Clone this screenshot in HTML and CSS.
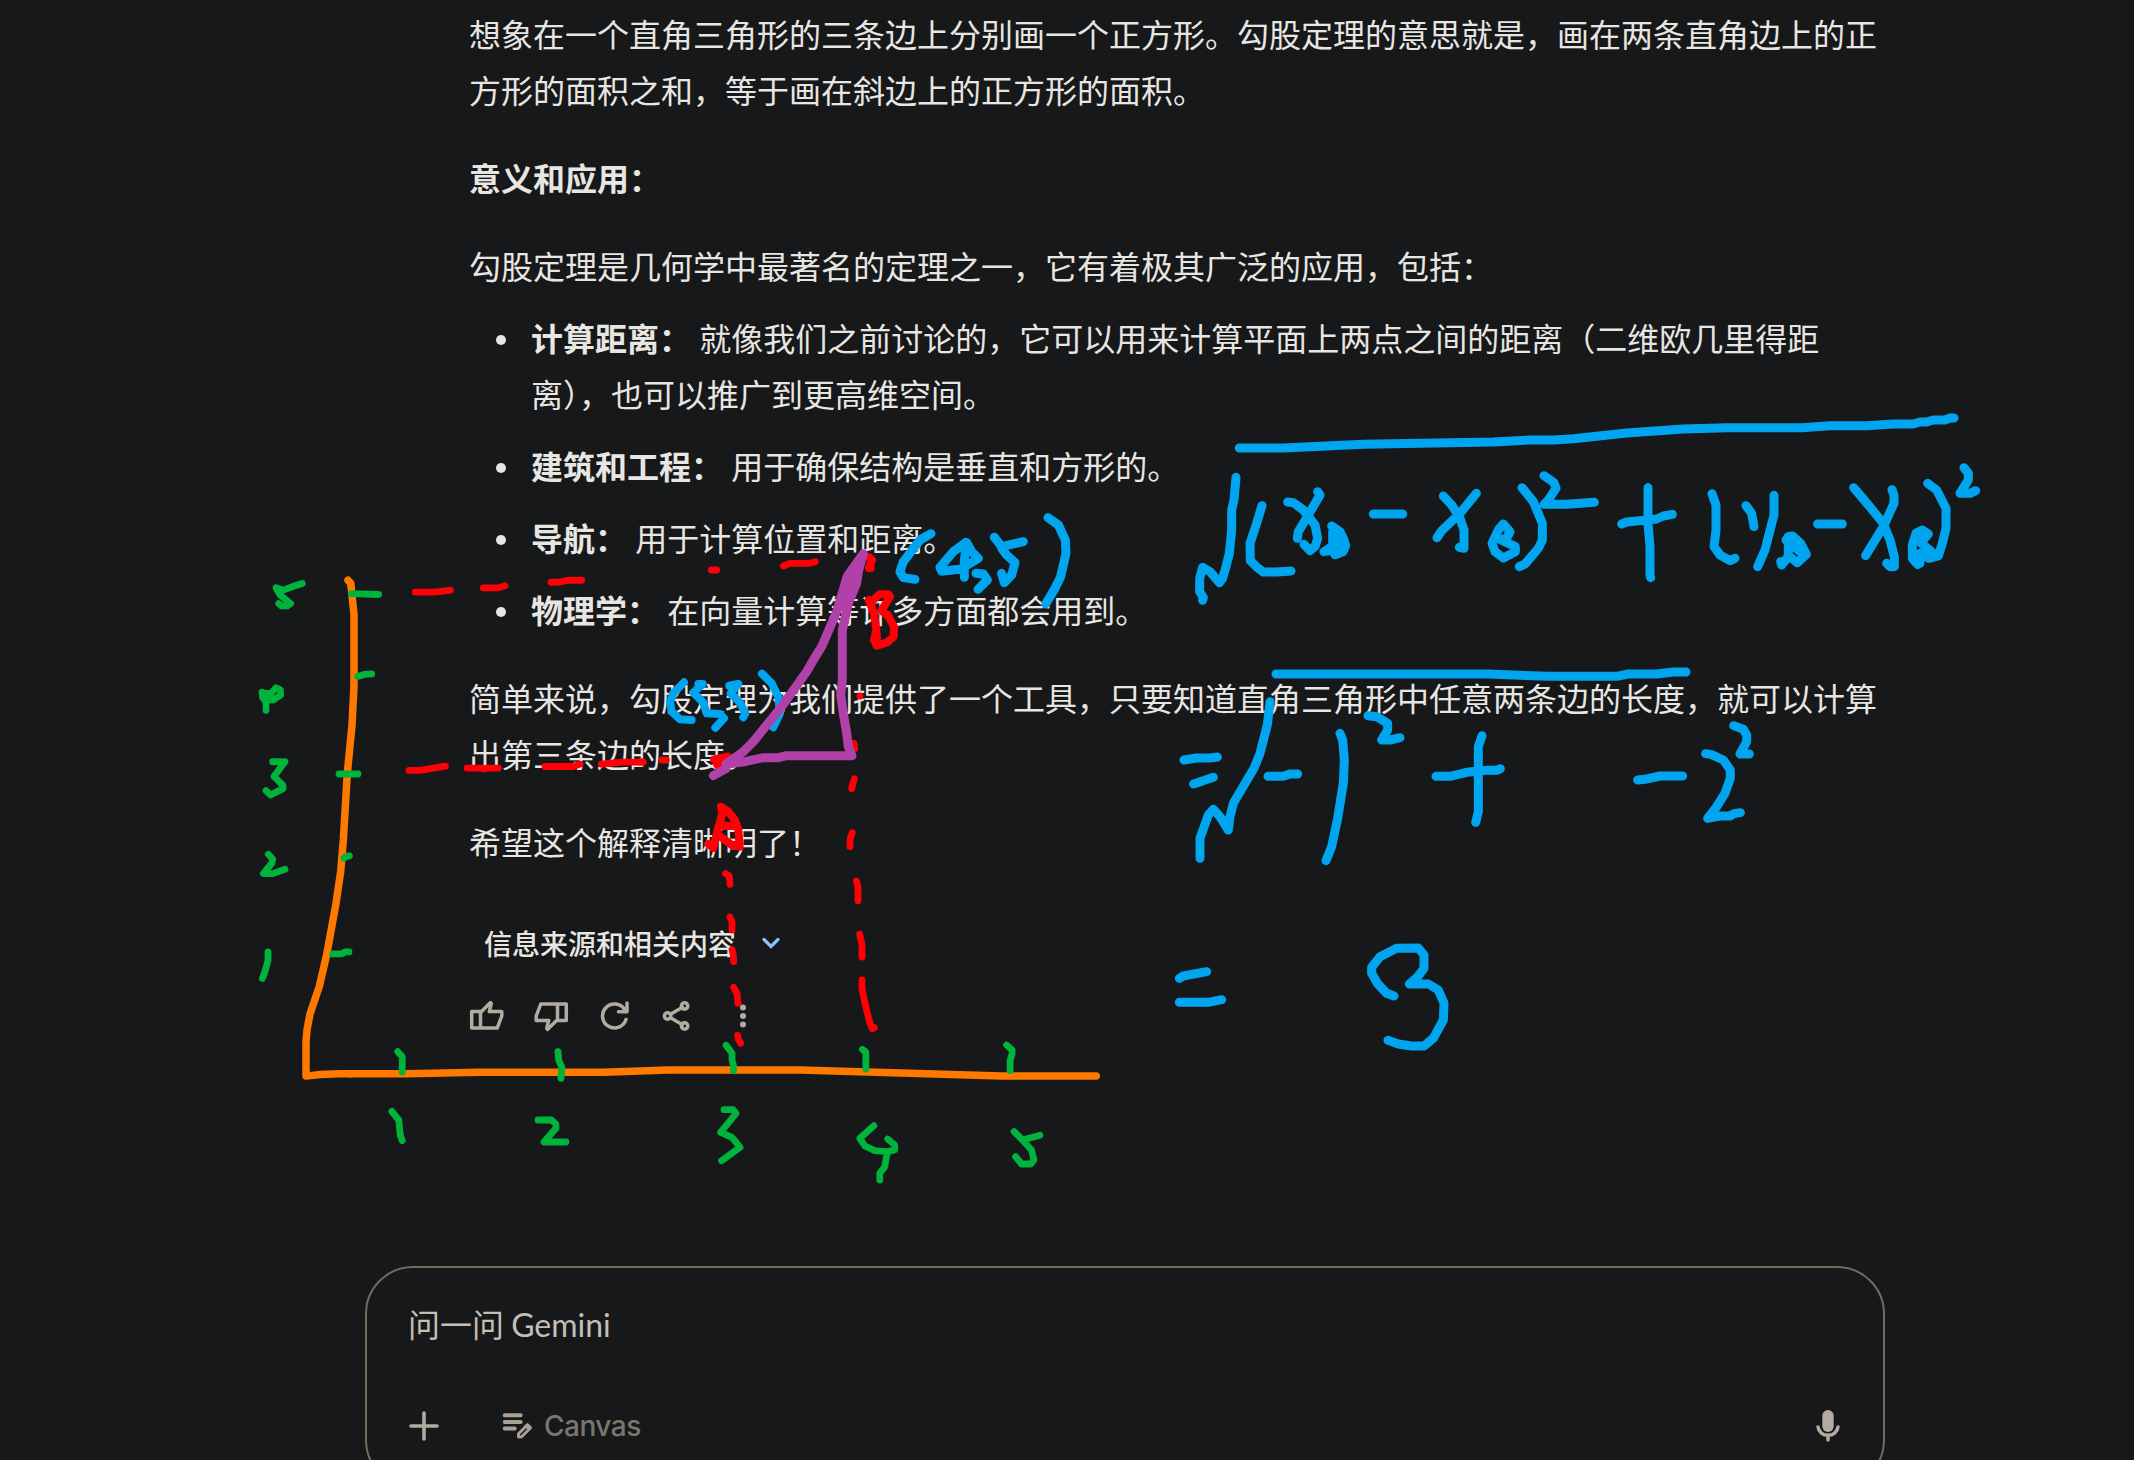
FILE: index.html
```html
<!DOCTYPE html>
<html lang="zh-CN">
<head>
<meta charset="utf-8">
<title>Gemini</title>
<link rel="stylesheet" href="styles.css">
</head>
<body>
<main class="page">
  <article class="answer">
    <p>想象在一个直角三角形的三条边上分别画一个正方形。勾股定理的意思就是，画在两条直角边上的正方形的面积之和，等于画在斜边上的正方形的面积。</p>
    <p><strong>意义和应用：</strong></p>
    <p class="lead">勾股定理是几何学中最著名的定理之一，它有着极其广泛的应用，包括：</p>
    <ul>
      <li><strong>计算距离：</strong> 就像我们之前讨论的，它可以用来计算平面上两点之间的距离（二维欧几里得距离），也可以推广到更高维空间。</li>
      <li><strong>建筑和工程：</strong> 用于确保结构是垂直和方形的。</li>
      <li><strong>导航：</strong> 用于计算位置和距离。</li>
      <li><strong>物理学：</strong> 在向量计算等许多方面都会用到。</li>
    </ul>
    <p>简单来说，勾股定理为我们提供了一个工具，只要知道直角三角形中任意两条边的长度，就可以计算出第三条边的长度。</p>
    <p>希望这个解释清晰明了！</p>
    <div class="sources">
      <span>信息来源和相关内容</span>
      <svg class="chevron" viewBox="0 0 20 12"><path d="M3 2.5l7 7 7-7"/></svg>
    </div>
    <div class="actions">
      <svg viewBox="0 0 36 36"><path d="M2.700 13.500h8.800v16.600H2.700zM11.500 14.500L21.500 4.500l.8 1.200-2 7.800h12.500v4.500l-4.600 12.100H11.500"/></svg>
      <svg viewBox="0 0 36 36"><path d="M33.300 22.500h-8.800V5.900h8.800zM24.500 21.500L14.500 31.500l-.8-1.200 2-7.800H3.200V18L7.800 5.900h16.700"/></svg>
      <svg viewBox="0 0 36 36"><path d="M29 21.500A12 12 0 1 1 27.500 11.200M30 5v8.700H21.500M26 13.700l4-4"/></svg>
      <svg viewBox="0 0 36 36"><path d="M9.500 16.300L21.500 9.300M9.500 19.700l12 7"/><circle cx="6.600" cy="18" r="3.200"/><circle cx="23.600" cy="8" r="3.200"/><circle cx="23.600" cy="28" r="3.200"/></svg>
      <svg class="dots" viewBox="0 0 36 36"><circle cx="18" cy="9.500" r="3"/><circle cx="18" cy="18" r="3"/><circle cx="18" cy="26.500" r="3"/></svg>
    </div>
  </article>

  <section class="composer">
    <div class="prompt">问一问 <span>Gemini</span></div>
    <div class="tools">
      <svg class="plus" viewBox="0 0 32 32"><path d="M16 3v26M3 16h26"/></svg>
      <div class="canvas">
        <svg class="canvas-icon" viewBox="0 0 32 30"><path d="M3.700 4.200h16M3.700 11h16M3.700 17.500h10"/><path class="pencil" d="M17.500 22.700l9-9 3.100 3.100-9 9-3.100.1z"/><path class="pencil" d="M25 15l3 3"/></svg>
        <span>Canvas</span>
      </div>
      <svg class="mic" viewBox="0 0 24 34"><rect x="6.300" y="1" width="11.400" height="22" rx="5.700"/><path d="M2 18c.7 5 5 8.300 10 8.300S21.300 23 22 18M12 26v5"/></svg>
    </div>
  </section>
</main>

<svg class="ink" viewBox="0 0 2134 1460">
  <g class="orange">
    <path transform="translate(230 500) scale(.33333 .39541)" d="M354 203L362 210 366 240 372 290V470L366 570 352 690 340 860 332 940 318 1020 290 1150 268 1230 240 1300 231 1340 228 1370V1457L270 1453 325 1451H360"/>
    <path transform="translate(350 1020) scale(.49745 .33333)" d="M0 161H115L260 157H510L640 150H905L1310 168H1500"/>
  </g>
  <g class="red" transform="translate(230 500) scale(.33333 .39541)">
    <path d="M556 233H615L661 228M760 222H805L825 217M963 208H985L1015 203H1055M537 684H570L646 673M711 678H755L765 680 770 678H805M945 674H1030L1050 668M1114 668L1175 663H1240"/>
  </g>
  <g class="red" transform="translate(640 480) scale(.33333)">
    <path d="M0 846H4M66 840H79M214 270H230M430 258L450 250H510L526 245M660 648h.1M642 790L644 806M643 896L635 926"/>
    <path class="bold" d="M222 838L262 830 232 855 250 848M688 232L696 240 687 264H692M686 360L702 400 709 450 712 496M709 450L702 480M698 362L718 343H745L750 350 724 392 745 408 762 440 761 470 740 488 710 497 703 480"/>
  </g>
  <g class="red" transform="translate(440 780) scale(.33333)">
    <path class="bold" d="M805 192L820 204 833 150 847 100 843 80 865 95 885 120 895 150 899 200 875 195 835 165M843 137H885"/>
    <path d="M857 281L868 288 870 313M870 411L876 425V450M876 509L880 525 881 545M881 622L891 640 894 670M893 766L895 778 902 790M1237 158L1231 175 1230 200M1249 303L1254 320V362M1259 462L1266 495V531M1266 600V625L1275 670 1290 730 1297 746 1303 743"/>
  </g>
  <g class="green" transform="translate(230 500) scale(.33333 .39541)">
    <path d="M217 211L195 217 160 228 138 222 150 240 182 262 172 268H155L146 262M96 486L98 500 108 510V532M108 505L130 506 152 493 151 480 138 475 122 490 98 488M128 662H165L132 699 159 722V730L122 746 108 735M115 896L128 908 126 918 100 945H128L165 934M114 1143V1165L104 1195 97 1210M364 237L446 239M383 446L405 441 425 440M327 693H384M341 906L350 901 358 900M308 1148H335L345 1143H357"/>
  </g>
  <g class="green" transform="translate(350 1020) scale(.49745 .33333)">
    <path d="M96 95L105 110V156M418 95L420 122 426 142 424 175M756 76L768 100V120L771 138V152M1030 88L1037 96V147M1320 75L1331 90V102L1327 120V152M84 274L98 300 101 345 105 362M378 300H405L414 312V325L390 366H434M752 269H770L776 280 745 337 768 352 784 382 747 422M1053 317L1025 355 1035 378 1055 392 1080 395 1095 390V375L1081 357M1080 395L1075 440 1065 460V480M1335 335L1352 360 1387 346M1352 360L1370 390 1375 420 1368 432H1350L1338 410"/>
  </g>
  <g class="blue" transform="translate(640 480) scale(.33333)">
    <path d="M873 161L840 180 790 245 780 275 790 293 825 298M978 187L940 215 900 262 905 274 960 268 1015 235 995 215 980 188 973 240V292M1008 280L1030 282 1042 300 1014 328M1063 172L1085 200 1150 185M1085 205L1100 225 1125 248 1115 285 1093 308 1085 280M1224 113L1255 135 1276 180 1278 220 1262 290 1245 325 1217 372"/>
    <path class="fine" d="M132 607L100 640 90 665 95 695 120 718 155 720M175 612H188L160 638 190 668 200 700 240 702 252 715 226 743M268 617L295 612 272 640 300 668 316 700 310 712M366 581L395 610 415 650 420 700 400 742"/>
  </g>
  <g class="blue" transform="translate(1160 390) scale(.33333)">
    <path d="M238 174H370L610 163 1000 156 1110 150H1180L1240 146 1400 129 1570 117 1700 113H1925L2010 107H2120L2200 102H2260L2280 96H2300L2320 90H2355L2370 84H2382"/>
    <path d="M228 262L222 330 215 360V420L208 490 198 530 188 565 178 578 150 545 128 532 119 565V605L130 622 128 631M306 347L290 400 270 460 271 512 292 533 310 546H350L393 543M383 336L400 338 430 360 465 405 473 445 466 468 450 482 432 463M473 305L480 315 445 375 415 425 412 445M515 408L540 425 552 450 557 467 549 485 525 494 518 480 492 485 518 468V425L540 465M640 372H728M850 318L875 345 900 385 912 420V475L898 472M949 310L900 370 845 422 831 443M1030 402L1050 425 1040 445 1020 448 1066 470V485L1030 504 1005 485 996 460 1015 420 1030 402M1086 293L1120 335 1147 400V450L1135 475 1095 522 1078 530M1152 257L1182 278 1188 295 1165 330 1152 343H1220L1303 337"/>
    <path d="M348 852H985L1165 859H1370L1405 852H1490L1540 846H1578"/>
    <path d="M72 1110L110 1104H150L172 1101M101 1182L160 1162M330 935L322 1005 300 1090 282 1135 220 1240 210 1280 205 1320 180 1280 160 1258 145 1275 120 1345V1405M324 1159H370L390 1152H413M540 1030L548 1050 553 1110 550 1180 533 1285 515 1370 498 1412M624 977L650 980 683 1000V1020L665 1050H690L720 1043M828 1159H870L920 1147 980 1141H1010L1021 1136M966 1037L955 1070V1265L947 1297"/>
  </g>
  <g class="blue" transform="translate(1560 390) scale(.33333)">
    <path d="M185 402L200 396 290 387 310 378 337 373M264 293V400L270 470V555L272 563M456 311L468 345V420L462 470 480 495 510 512 525 505M558 347L575 370 582 410M642 316V375L615 480 593 530M662 515L665 525 685 500V440L697 438 722 460 739 493 712 518 690 500M678 450L720 485M773 402H847M881 293L925 345 970 400 990 450 1003 500V530H990L980 520M996 299L1002 315V340L970 410 917 497M1073 524L1057 505V465L1068 430 1087 420 1105 432 1082 458 1115 485 1107 505 1080 490V520M1103 280L1130 300 1158 355V415L1147 460 1135 498 1107 505M1212 233L1225 250V270L1200 310H1230L1247 302M233 1170L255 1168 300 1158H368M437 1091L455 1094 490 1110 511 1140V1165L495 1210 470 1250 443 1285 480 1278H510L522 1271 541 1268M521 1007L550 1018 560 1035V1055L540 1092H568"/>
  </g>
  <g class="blue" transform="translate(1140 860) scale(.33333)">
    <path d="M118 355L130 348 200 335M118 427H205L245 419M762 408L740 400 712 370 695 340V322L720 290 770 265 835 264 852 285V325L835 348 808 372H865L895 390 912 430 910 480 880 535 852 558H815L775 552 744 541"/>
  </g>
  <g class="purple" transform="translate(640 480) scale(.33333)">
    <path d="M220 887L258 866M258 852L310 815 340 785 425 680 500 575 520 540 545 500 590 395 622 288 670 221 655 275 650 310 625 370 607 450V600L602 645 610 700 620 760 625 800 636 827H440L415 833H370L315 845 258 852M668 228L638 300 612 380"/>
  </g>
</svg>
</body>
</html>
```
FILE: styles.css
```css
* { box-sizing: border-box; }

body {
  margin: 0;
  height: 1460px;
  overflow: hidden;
  background: #171819;
  color: #e8e6e3;
  font: 32px/56px "Noto Sans CJK SC", sans-serif;
}

.page {
  display: flex;
  flex-direction: column;
  gap: 232px;
  height: 1488px;
  padding: 5px 0 0 365px;
}

.answer { width: 1410px; margin-left: 104px; }
.answer p { margin: 0 0 32px; }
.answer .lead { margin-bottom: 16px; }

.answer ul {
  display: flex;
  flex-direction: column;
  gap: 16px;
  margin: 0 0 32px;
  padding-left: 62px;
  list-style: none;
  word-spacing: 1px;
}

.answer li::before {
  content: "";
  float: left;
  width: 10px;
  height: 10px;
  margin: 26px 0 0 -35px;
  border-radius: 50%;
  background: #e8e6e3;
}

.sources {
  display: flex;
  align-items: center;
  gap: 25px;
  height: 56px;
  margin-top: 46px;
  padding-left: 15px;
  font-size: 28px;
  font-weight: 500;
}

.chevron {
  width: 20px;
  height: 12px;
  fill: none;
  stroke: #8ac2ff;
  stroke-width: 3.200;
  stroke-linecap: round;
}

.actions { display: flex; gap: 28px; margin-top: 27px; }
.actions svg {
  width: 36px;
  height: 36px;
  fill: none;
  stroke: #b2aba1;
  stroke-width: 3.500;
  stroke-linejoin: round;
  stroke-linecap: round;
}
.actions .dots { fill: #b2aba1; stroke: none; }

.composer {
  flex: none;
  display: flex;
  flex-direction: column;
  width: 1520px;
  height: 222px;
  padding: 27px 43px 0 41px;
  border: 2px solid #736b5e;
  border-radius: 48px;
}

.prompt { color: #c4bfb6; line-height: 56px; }
.prompt span { font-family: Lato, sans-serif; }

.tools { display: flex; align-items: center; height: 56px; margin-top: 45px; }
.plus {
  width: 32px;
  height: 32px;
  fill: none;
  stroke: #b2aba1;
  stroke-width: 3.600;
  stroke-linecap: round;
}
.canvas {
  display: flex;
  align-items: center;
  gap: 11px;
  margin-left: 61px;
  color: #7b766d;
  font: 500 28px/56px Inter, sans-serif;
  letter-spacing: -.5px;
}
.canvas-icon {
  width: 32px;
  height: 30px;
  fill: none;
  stroke: #a8a095;
  stroke-width: 4;
  stroke-linecap: round;
}
.canvas-icon .pencil { stroke-width: 3; stroke-linejoin: round; }
.mic {
  width: 24px;
  height: 34px;
  margin-left: auto;
  fill: #b2aba1;
}
.mic path {
  fill: none;
  stroke: #b2aba1;
  stroke-width: 3.500;
  stroke-linecap: round;
}

.ink {
  position: absolute;
  top: 0;
  left: 0;
  width: 2134px;
  height: 1460px;
  pointer-events: none;
  fill: none;
  stroke-linecap: round;
  stroke-linejoin: round;
}
.ink path { vector-effect: non-scaling-stroke; }
.orange { stroke: #ff7800; stroke-width: 7.500px; }
.red { stroke: #ff0007; stroke-width: 6.800px; }
.red .bold { stroke-width: 8px; }
.green { stroke: #00b33c; stroke-width: 6.800px; }
.blue { stroke: #00a5f0; stroke-width: 9px; }
.blue .fine { stroke-width: 8px; }
.purple { stroke: #b041a8; stroke-width: 9px; }
```
